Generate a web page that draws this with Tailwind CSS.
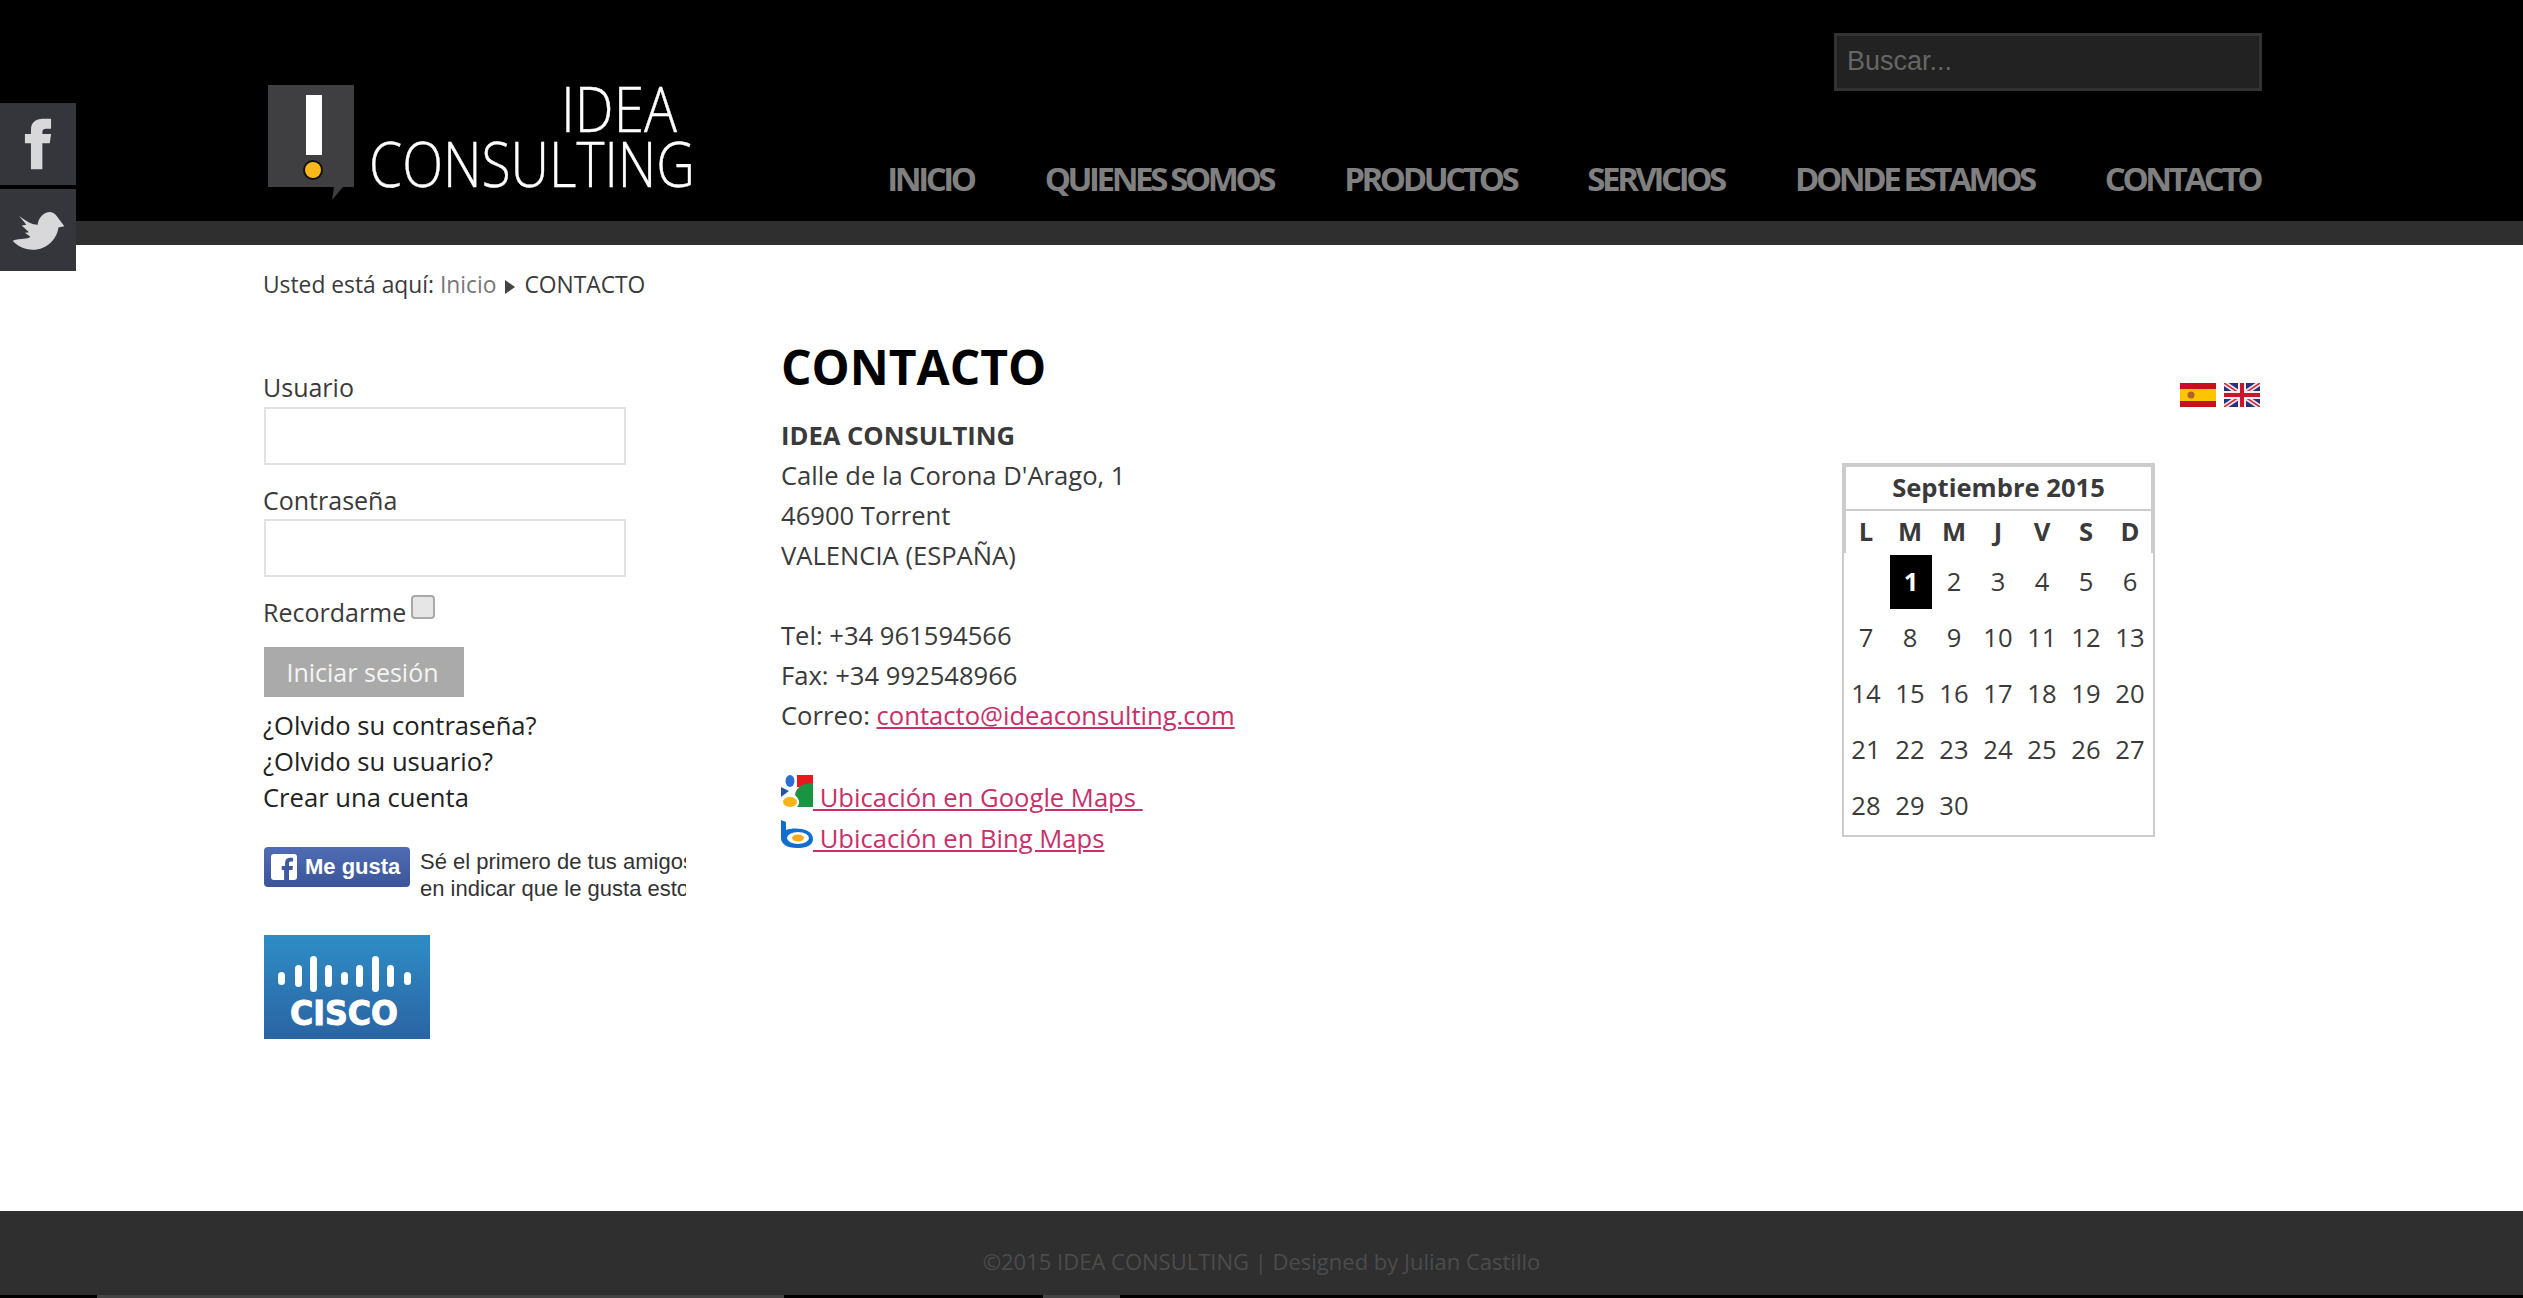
<!DOCTYPE html>
<html lang="es">
<head>
  <meta charset="UTF-8">
  <title>CONTACTO - IDEA CONSULTING</title>
  <script src="https://cdn.jsdelivr.net/npm/@tailwindcss/browser@4"></script>
</head>
<body class="relative flex h-[1298px] flex-col overflow-hidden bg-white font-['Open_Sans','Liberation_Sans',sans-serif] text-[25.6px] leading-[40px] text-[#3a3a3a]">

  <!-- redes sociales -->
  <div class="absolute left-0 top-[103px] flex w-[76px] flex-col gap-[4px]">
    <a class="flex h-[82px] items-center justify-center bg-[#35363b]">
      <svg class="h-[52px] w-[28px] text-[#d8d8da]" viewBox="70 60 82 155" fill="currentColor"><path d="M90 213V135H72V108H90V95C90 72 105 62 125 62H150V92H135C127 92 124 96 124 103V108H150L146 135H124V213Z"/></svg>
    </a>
    <a class="flex h-[82px] items-center justify-center bg-[#35363b]">
      <svg class="h-[43px] w-[55px] text-[#d8d8da]" viewBox="30 325 165 128" fill="currentColor"><path d="M35 420C60 410 80 418 88 408L72 396L84 394L62 374L76 372L54 345C75 362 95 372 110 372C112 350 130 332 150 334C160 335 168 345 172 352L190 376L172 380C170 410 140 447 95 447C70 447 50 436 35 420Z"/></svg>
    </a>
  </div>

  <!-- cabecera -->
  <header class="h-[221px] shrink-0 bg-black">
    <div class="ml-[264px] flex w-[1998px] justify-between">
      <svg class="ml-[4px] mt-[85px] h-[116px] w-[430px]" viewBox="0 0 430 116">
        <path d="M0 0h86v102H75l-11 13 2-13H0z" fill="#3f3e40"/>
        <rect x="38" y="10" width="16" height="60" fill="#fff"/>
        <circle cx="45" cy="85" r="10" fill="#111"/>
        <circle cx="45" cy="85" r="8" fill="#fbb81b"/>
        <text x="293" y="47" font-family="Open Sans" font-weight="300" font-size="63" fill="#fff" stroke="#fff" stroke-width="0.4" textLength="116" lengthAdjust="spacingAndGlyphs">IDEA</text>
        <text x="101" y="102" font-family="Open Sans" font-weight="300" font-size="63" fill="#fff" stroke="#fff" stroke-width="0.4" textLength="326" lengthAdjust="spacingAndGlyphs">CONSULTING</text>
      </svg>
      <div class="flex flex-col items-end pt-[33px]">
        <input type="text" placeholder="Buscar..." class="h-[58px] w-[428px] border-[3px] border-[#333] bg-[#222] px-[10px] pb-[2px] font-['Liberation_Sans',sans-serif] text-[27px] placeholder:text-[#666]">
        <nav class="mr-[2px] mt-[68px] flex gap-[71px] text-[33px] font-bold tracking-[-3.4px] text-[#808080]">
          <a>INICIO</a>
          <a>QUIENES SOMOS</a>
          <a>PRODUCTOS</a>
          <a>SERVICIOS</a>
          <a>DONDE ESTAMOS</a>
          <a>CONTACTO</a>
        </nav>
      </div>
    </div>
  </header>
  <div class="h-[24px] shrink-0 bg-[#2f2f2f]"></div>

  <div class="ml-[264px] w-[1998px]">
    <!-- migas -->
    <div class="-ml-[1px] mt-[20px] flex items-center text-[22.8px]">
      <span>Usted está aquí:&nbsp;</span><a class="text-[#777]">Inicio</a>
      <svg class="mx-[9px] mt-[3px] h-[14px] w-[10px]" viewBox="0 0 10 14"><path d="M0 0l10 7-10 7z" fill="#444"/></svg>
      <span>CONTACTO</span>
    </div>

    <div class="flex">
      <!-- login -->
      <aside class="w-[517px] pt-[64px] text-[25px] leading-[36px]">
        <label class="-ml-[1px] block">Usuario</label>
        <input type="text" class="mt-[2px] block h-[58px] w-[362px] border-2 border-[#e2e2e2]">
        <label class="-ml-[1px] mt-[17px] block">Contraseña</label>
        <input type="password" class="mt-[1px] block h-[58px] w-[362px] border-2 border-[#e2e2e2]">
        <div class="-ml-[1px] mt-[17px] flex items-start">
          <span>Recordarme</span>
          <span class="ml-[5px] mt-[1px] h-[24px] w-[24px] rounded-[4px] border-2 border-[#a8a8a8] bg-[#e6e6e6]"></span>
        </div>
        <button class="mt-[17px] block h-[50px] w-[200px] bg-[#aaa] pr-[3px] text-center text-[25px] text-[#f4f4f4]">Iniciar sesión</button>
        <div class="-ml-[1px] mt-[11px] text-[25.6px] text-[#222]">
          <a class="block">¿Olvido su contraseña?</a>
          <a class="block">¿Olvido su usuario?</a>
          <a class="block">Crear una cuenta</a>
        </div>
        <div class="mt-[31px] flex h-[64px] w-[422px] overflow-hidden">
          <div class="flex h-[40px] w-[146px] shrink-0 items-center gap-[8px] rounded-[4px] bg-gradient-to-b from-[#4f6db4] to-[#3c5498] pl-[7px] font-['Liberation_Sans',sans-serif] text-[22px] font-bold text-white">
            <svg class="h-[26px] w-[26px]" viewBox="0 0 26 26"><rect width="26" height="26" rx="3" fill="#fff"/><path d="M18 26V16h3.400l.6-4h-4V9.500c0-1.200.4-2 2-2h2.100V4c-.4 0-1.600-.2-3-.2-3 0-5 1.800-5 5.200v3h-3.400v4H13.100v10z" fill="#3f5aa0"/></svg>
            <span>Me gusta</span>
          </div>
          <div class="ml-[10px] pt-[1px] whitespace-nowrap font-['Liberation_Sans',sans-serif] text-[22px] leading-[27px] text-[#333]">Sé el primero de tus amigos<br>en indicar que le gusta esto</div>
        </div>
        <svg class="mt-[24px] h-[104px] w-[166px]" viewBox="0 0 166 104">
          <defs><linearGradient id="cisco" x1="0" y1="0" x2="0" y2="1"><stop offset="0" stop-color="#2e8dc6"/><stop offset="1" stop-color="#2a64a3"/></linearGradient></defs>
          <rect width="166" height="104" fill="url(#cisco)"/>
          <g fill="#fff">
            <rect x="14" y="37" width="7" height="13" rx="3.500"/><rect x="31" y="30" width="7" height="22" rx="3.500"/><rect x="46" y="21" width="7" height="36" rx="3.500"/>
            <rect x="61" y="30" width="7" height="22" rx="3.500"/><rect x="77" y="37" width="7" height="13" rx="3.500"/><rect x="92" y="30" width="7" height="22" rx="3.500"/>
            <rect x="108" y="21" width="7" height="36" rx="3.500"/><rect x="123" y="30" width="7" height="22" rx="3.500"/><rect x="140" y="37" width="7" height="13" rx="3.500"/>
          </g>
          <text x="26" y="90" font-family="DejaVu Sans" font-weight="700" font-size="34" fill="#fff" stroke="#fff" stroke-width="1" textLength="108" lengthAdjust="spacingAndGlyphs">CISCO</text>
        </svg>
      </aside>

      <!-- contenido -->
      <main class="w-[1061px] pt-[32px]">
        <h1 class="text-[48px] font-bold leading-[60px] text-black">CONTACTO</h1>
        <div class="mt-[19px]">
          <p class="font-bold">IDEA CONSULTING</p>
          <p>Calle de la Corona D'Arago, 1</p>
          <p>46900 Torrent</p>
          <p>VALENCIA (ESPAÑA)</p>
          <p class="h-[40px]"></p>
          <p>Tel: +34 961594566</p>
          <p>Fax: +34 992548966</p>
          <p>Correo: <a class="text-[#c9306a] underline">contacto@ideaconsulting.com</a></p>
          <p class="h-[39px]"></p>
          <p class="leading-[41px]">
            <svg class="inline h-[32px] w-[32px] align-baseline" viewBox="0 0 32 32">
              <rect x="16" width="16" height="12" fill="#e8181c"/>
              <path d="M32 8C22 8 15 12 14 20c4 4 6 8 2 12h16z" fill="#1a9440"/>
              <ellipse cx="9" cy="6" rx="4.500" ry="6" fill="#2c6fd0"/>
              <path d="M0 12l8 4-8 6z" fill="#2a52a8"/>
              <ellipse cx="9" cy="27" rx="7" ry="5" fill="#f5b518"/>
            </svg><a class="text-[#c9306a] underline"> Ubicación en Google Maps&nbsp;</a>
          </p>
          <p class="leading-[42px]">
            <svg class="inline h-[28px] w-[32px] align-baseline" viewBox="0 0 32 28">
              <path d="M0 0l5 2v8c8-3 27-2 27 9 0 8-10 9-16 9C6 28 0 24 0 18z" fill="#0f6fd1"/>
              <ellipse cx="17" cy="18" rx="11" ry="6" fill="#fff"/>
              <ellipse cx="17" cy="18" rx="6" ry="3.500" fill="#f6a91d"/>
            </svg><a class="text-[#c9306a] underline"> Ubicación en Bing Maps</a>
          </p>
        </div>
      </main>

      <!-- idiomas y calendario -->
      <aside class="w-[420px] pt-[78px]">
        <div class="flex justify-end gap-[8px] pr-[2px]">
          <svg class="h-[24px] w-[36px]" viewBox="0 0 36 24">
            <rect width="36" height="24" fill="#c8101e"/>
            <rect y="6" width="36" height="12" fill="#fdc400"/>
            <circle cx="11" cy="12" r="3.500" fill="#b0602c"/>
          </svg>
          <svg class="h-[24px] w-[36px]" viewBox="0 0 36 24">
            <rect width="36" height="24" fill="#24337a"/>
            <path d="M0 0l36 24M36 0L0 24" stroke="#f3e6ea" stroke-width="5"/>
            <path d="M0 0l36 24M36 0L0 24" stroke="#cf2a3c" stroke-width="1.500"/>
            <path d="M18 0v24M0 12h36" stroke="#f6ecee" stroke-width="8"/>
            <path d="M18 0v24M0 12h36" stroke="#c9162c" stroke-width="4"/>
          </svg>
        </div>
        <div class="mt-[56px] h-[374px] w-[313px] border-2 border-[#ccc]">
          <div class="h-[88px] border-x-2 border-t-2 border-[#ccc]">
            <div class="flex h-[42px] items-center justify-center font-bold">Septiembre 2015</div>
            <div class="h-[2px] bg-[#ccc]"></div>
            <div class="-ml-[2px] grid h-[42px] grid-cols-[repeat(7,44px)] items-center text-center font-bold">
              <span>L</span><span>M</span><span>M</span><span>J</span><span>V</span><span>S</span><span>D</span>
            </div>
          </div>
          <div class="mt-[1px] grid grid-cols-[repeat(7,44px)] grid-rows-[repeat(5,56px)] items-center text-center">
            <span></span><span class="ml-[2px] mt-[1px] flex h-[54px] w-[42px] items-center justify-center justify-self-start self-start font-bold text-white bg-black">1</span><span>2</span><span>3</span><span>4</span><span>5</span><span>6</span>
            <span>7</span><span>8</span><span>9</span><span>10</span><span>11</span><span>12</span><span>13</span>
            <span>14</span><span>15</span><span>16</span><span>17</span><span>18</span><span>19</span><span>20</span>
            <span>21</span><span>22</span><span>23</span><span>24</span><span>25</span><span>26</span><span>27</span>
            <span>28</span><span>29</span><span>30</span>
          </div>
        </div>
      </aside>
    </div>
  </div>

  <!-- pie -->
  <footer class="mt-auto shrink-0">
    <div class="h-[84px] bg-[#2f2f2f] pt-[32px] text-center text-[22px] leading-[36px] text-[#4c4c4c]">©2015 IDEA CONSULTING | Designed by Julian Castillo</div>
    <div class="flex h-[3px] bg-black">
      <div class="ml-[97px] w-[687px] bg-[#444]"></div>
      <div class="ml-[259px] w-[77px] bg-[#444]"></div>
    </div>
  </footer>
</body>
</html>
